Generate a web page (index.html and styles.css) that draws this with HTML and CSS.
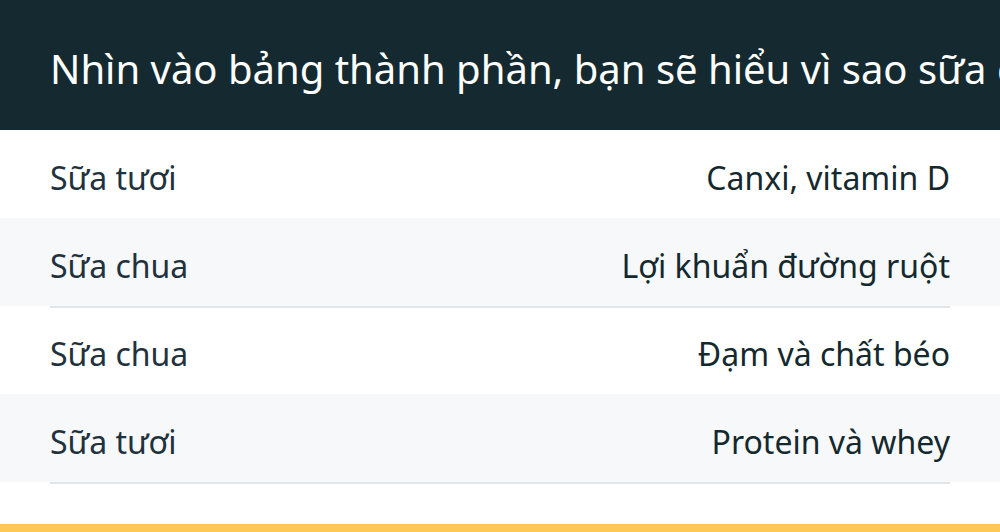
FILE: index.html
```html
<!DOCTYPE html>
<html lang="vi">
<head>
<meta charset="utf-8">
<link rel="stylesheet" href="styles.css">
</head>
<body>
<div class="page">
  <header class="banner">Nhìn vào bảng thành phần, bạn sẽ hiểu vì sao sữa chua và sữa tươi khác nhau</header>
  <section class="table">
    <div class="row"><span class="name">Sữa tươi</span><span class="value">Canxi, vitamin D</span></div>
    <div class="row alt"><span class="name">Sữa chua</span><span class="value">Lợi khuẩn đường ruột</span></div>
    <div class="rule"></div>
    <div class="row"><span class="name">Sữa chua</span><span class="value">Đạm và chất béo</span></div>
    <div class="row alt"><span class="name">Sữa tươi</span><span class="value">Protein và whey</span></div>
    <div class="rule"></div>
  </section>
  <footer class="band"></footer>
</div>
</body>
</html>
```
FILE: styles.css
```css
html, body {
  margin: 0;
  padding: 0;
  background: #ffffff;
}
.page {
  width: 1000px;
  height: 532px;
  overflow: hidden;
  font-family: "Noto Sans", "Open Sans", sans-serif;
}
.banner {
  box-sizing: border-box;
  height: 130px;
  padding: 42px 50px 34px;
  line-height: 54px;
  font-size: 40px;
  color: #ffffff;
  background: #152a30;
  white-space: nowrap;
  overflow: hidden;
}
.table {
  display: flex;
  flex-direction: column;
}
.row {
  box-sizing: border-box;
  height: 88px;
  padding: 7px 50px 0;
  display: flex;
  align-items: center;
  justify-content: space-between;
  font-size: 32px;
}
.row.alt {
  background: #f7f8fa;
}
.name {
  color: #21323d;
}
.value {
  color: #14292e;
}
.rule {
  height: 2px;
  margin: 0 50px -2px;
  background: #e0e5ea;
}
.band {
  margin-top: 42px;
  height: 20px;
  background: #fdc855;
}
```
